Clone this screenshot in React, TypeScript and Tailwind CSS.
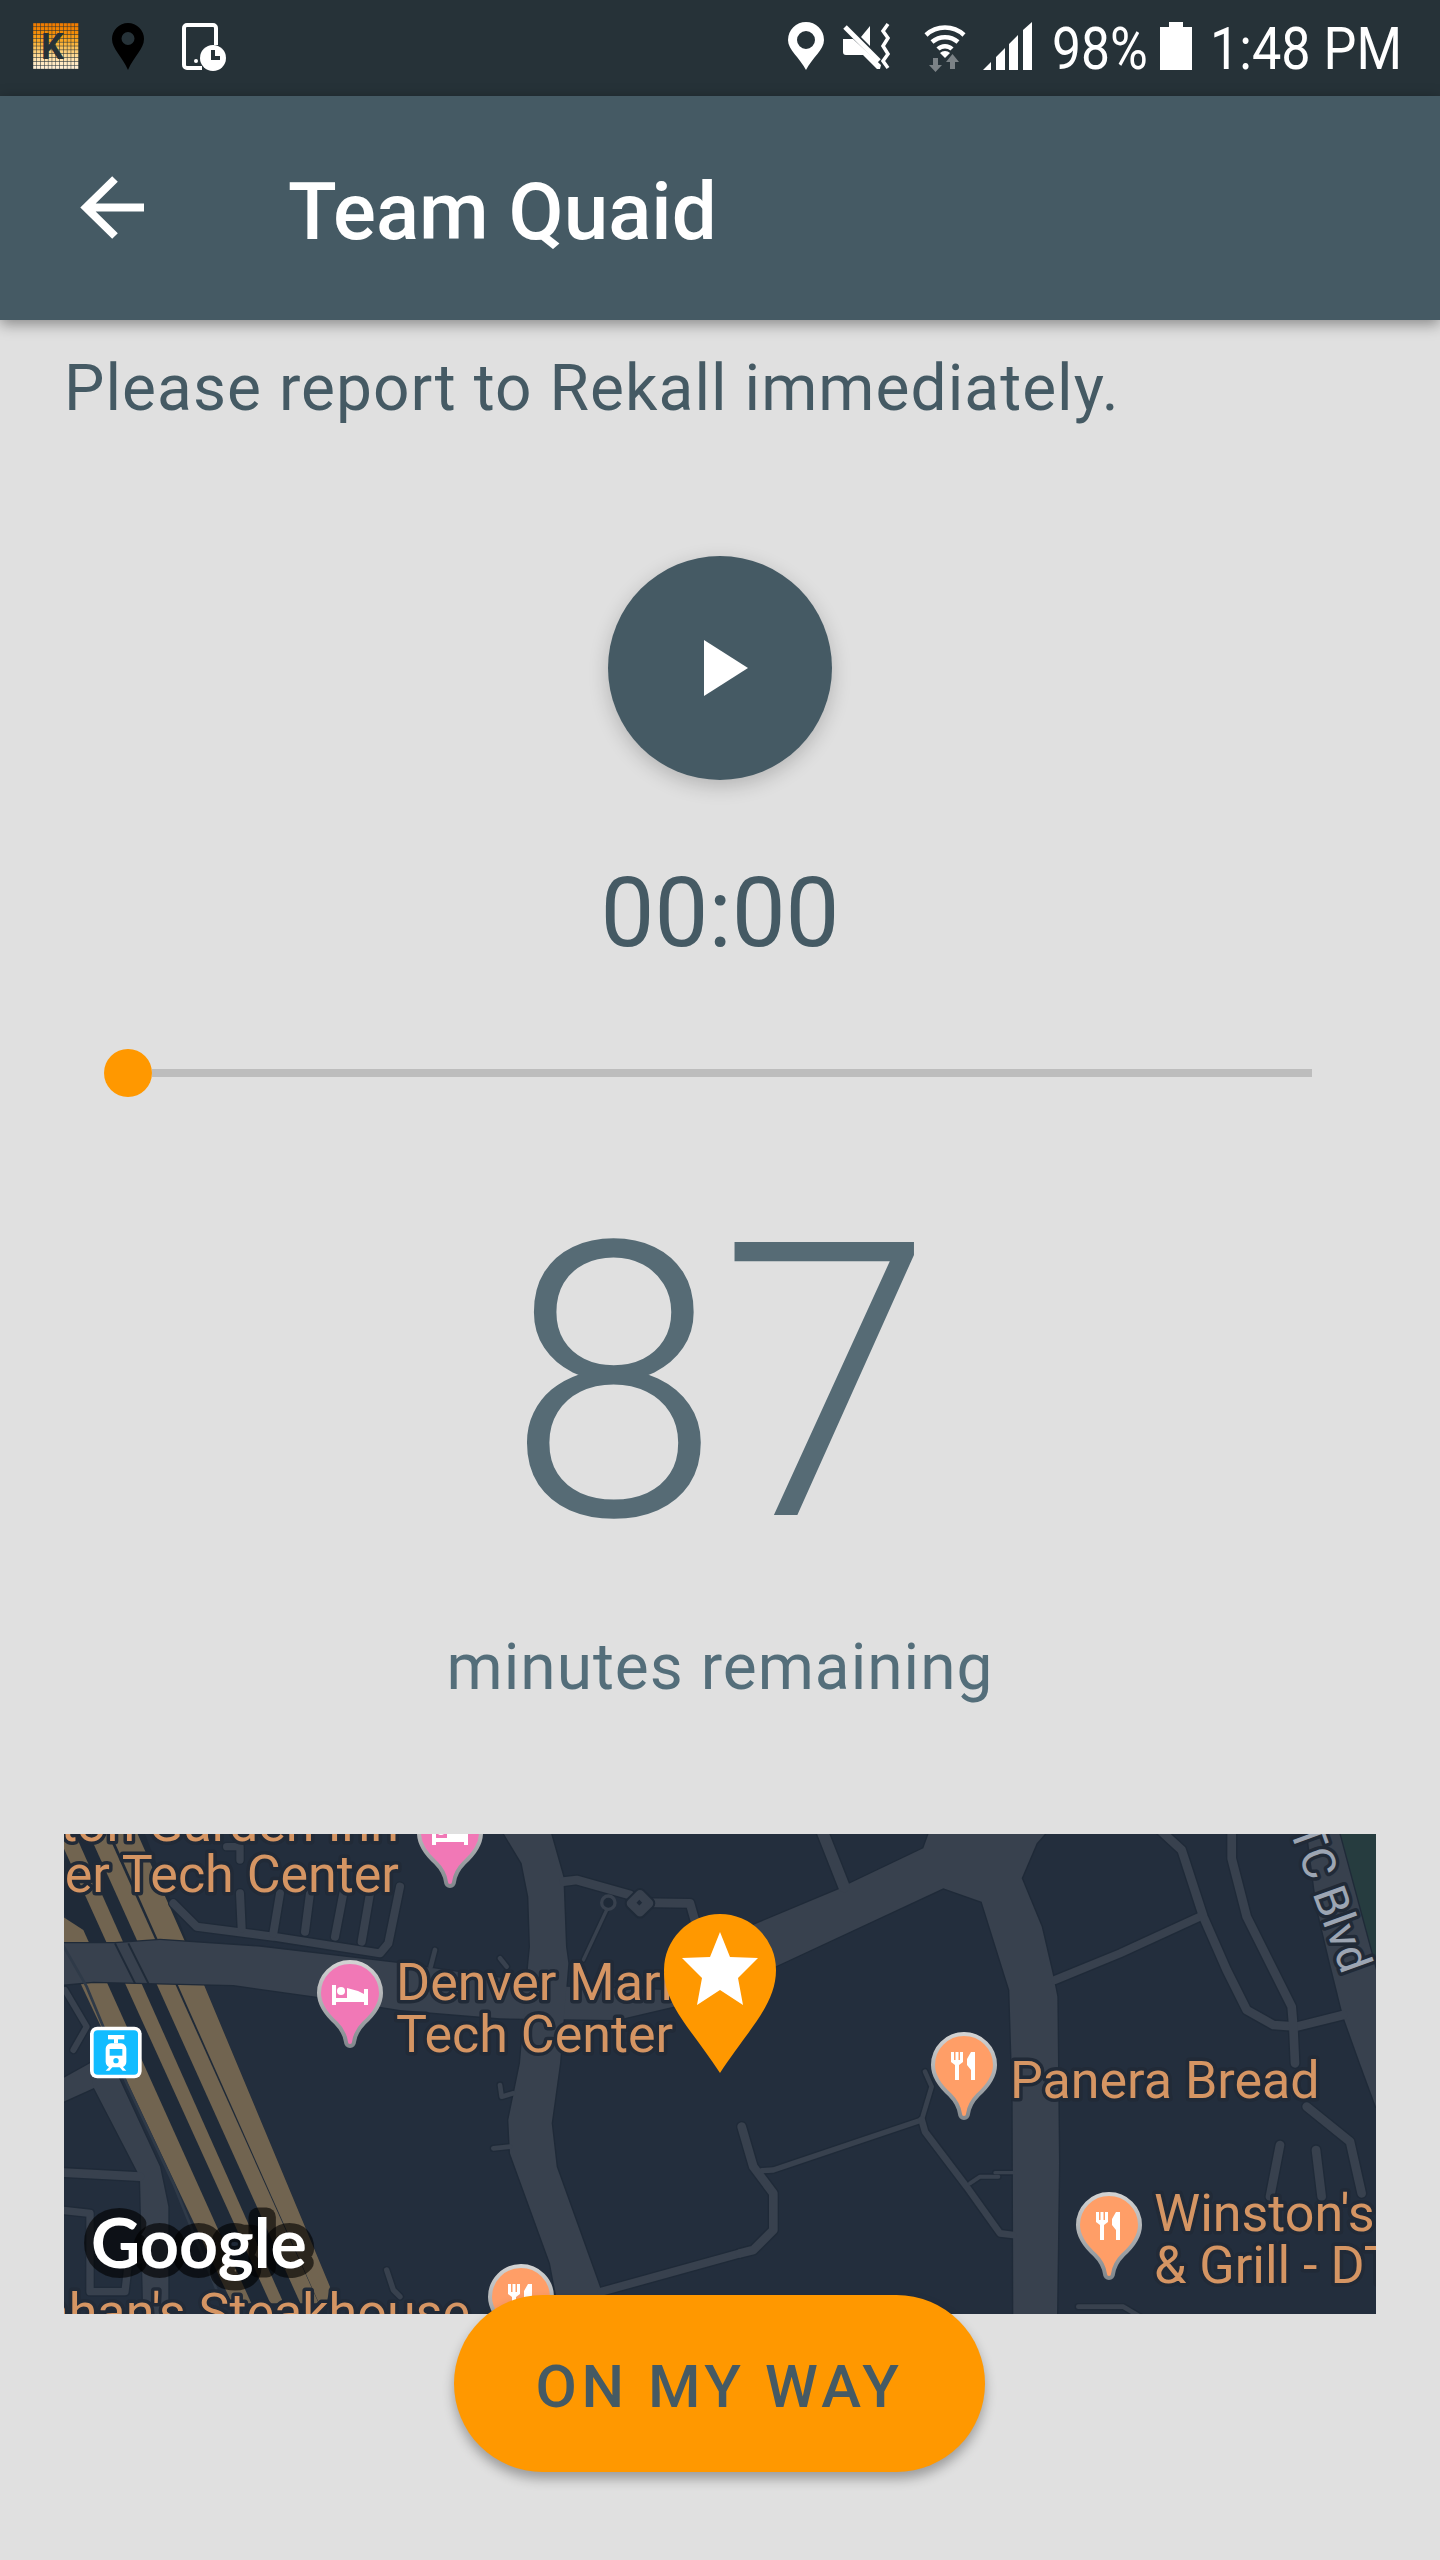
import React from "react";

const A = "translate(60 1830) scale(.33333)";
const B = "translate(400 1830) scale(.33333)";
const C = "translate(740 1830) scale(.33333)";
const D = "translate(1060 1830) scale(.33333)";

const polys: [string, string][] = [
  [A, "M0 340L165 340L300 330L600 350L1020 400L1220 430L1520 470L1820 480L1920 430L1920 510L1840 530L1670 570L1320 565L1020 540L770 500L520 465L100 455L0 465Z"],
  [A, "M0 750L90 700L110 770L0 820Z"],
  [A, "M90 700L170 730L300 1010L325 1130L325 1460L250 1460L240 1040L100 770Z"],
  [B, "M305 0L450 0L490 140L498 350L505 400L480 700L455 880L470 1010L610 1400L610 1460L480 1460L450 1300L330 970L325 870L360 700L385 400L390 350L385 200L365 100Z"],
  [C, "M-20 310L296 178L330 160L550 55L570 0L925 0L890 40L845 145L905 290L940 440L952 500L957 1000L951 1460L820 1460L818 800L808 480L725 215L610 175L105 410L-20 460Z"],
  [D, "M740 0L835 0L948 420L948 830L900 700L850 560L810 400L770 230Z"],
];

const lines: [string, string, number][] = [
  [A, "M0 1027L240 1040", 26],
  [A, "M0 1140L90 1150L90 1385L195 1385L205 1300L240 1290", 22],
  [A, "M15 480L80 590L40 660", 18],
  [A, "M340 220L410 290L640 320L960 370L985 340L1020 170", 24],
  [A, "M545 295L540 190", 24],
  [A, "M640 310L660 190", 24],
  [A, "M735 305L750 190", 24],
  [A, "M825 320L850 190", 24],
  [A, "M905 335L930 190", 24],
  [A, "M500 50L540 50L540 90", 22],
  [A, "M980 1320L1000 1380L1020 1400", 16],
  [B, "M490 155L530 150L690 195L720 218L870 220L890 290", 26],
  [B, "M620 240L550 390", 10],
  [B, "M105 360L92 410", 14],
  [B, "M300 385L320 410", 14],
  [B, "M300 765L305 800L340 790", 14],
  [B, "M280 955L330 950", 14],
  [B, "M605 1385L1020 1270", 24],
  [C, "M0 1270L40 1260L100 1200L100 1090L40 1010L5 890", 26],
  [C, "M65 1022L100 1020L545 870", 16],
  [C, "M545 870L575 770L555 725", 14],
  [C, "M545 870L555 905L680 1070L780 1210L820 1215", 20],
  [C, "M690 1060L720 1040L775 1040", 12],
  [C, "M765 1028L820 1028", 10],
  [C, "M245 0L312 170", 34],
  [D, "M-15 450L180 370L420 260", 24],
  [D, "M300 0L365 60L430 260L500 420L560 540L640 585L710 590L850 555", 26],
  [D, "M515 0L515 85L560 260L695 530L700 590L705 700", 26],
  [D, "M740 830L870 935L905 1090", 26],
  [D, "M660 945L630 1100", 26],
  [D, "M768 960L785 1100", 26],
  [D, "M55 1430L190 1430L240 1460", 14],
];

function Pin({ x, y, color, kind }: { x: number; y: number; color: string; kind: "bed" | "food" }) {
  return (
    <g transform={`translate(${x} ${y})`}>
      <path
        d="M-31 0A31 31 0 0 1 31 0C31 12 24 21 14 30C8 36 5 42 4 49A4 4 0 0 1 -4 49C-5 42 -8 36 -14 30C-24 21 -31 12 -31 0Z"
        fill={color}
        stroke="url(#pinEdge)"
        strokeWidth="4"
      />
      {kind === "bed" ? (
        <g fill="#fff">
          <rect x="-18" y="-8" width="4" height="20" />
          <rect x="-18" y="5" width="36" height="4" />
          <rect x="14" y="-4" width="4" height="16" />
          <circle cx="-9" cy="-2" r="4" />
          <path d="M-3 -5L8 -2L14 1L14 5L-3 5Z" />
        </g>
      ) : (
        <g fill="#fff">
          <path d="M-13 -13L-10 -13L-10 -5L-8.5 -5L-8.5 -13L-5.5 -13L-5.500 -5L-4 -5L-4 -13L-1 -13L-1 -3L-5 0L-5 15L-9 15L-9 0L-13 -3Z" />
          <path d="M3 -6L7 -13L11 -13L11 15L7 15L7 5L3 0Z" />
        </g>
      )}
    </g>
  );
}

function MapView() {
  const label = { fill: "#d59563", stroke: "#212a37", strokeWidth: 7, paintOrder: "stroke", strokeLinejoin: "round" as const, fontSize: 52 };
  return (
    <svg viewBox="64 1834 1312 480" className="block w-[1312px] h-[480px]">
      <defs>
        <linearGradient id="pinEdge" x1="0" y1="0" x2="0" y2="1">
          <stop offset="0" stopColor="#d2d2d2" />
          <stop offset="1" stopColor="#83898e" />
        </linearGradient>
      </defs>
      <rect x="64" y="1834" width="1312" height="480" fill="#232e3d" />
      <g transform={D}>
        <path d="M835 0L960 0L960 470Z" fill="#263c3f" />
      </g>
      {/* transit */}
      <g transform={A}>
        <path d="M60 0L250 0L430 460L660 1010L810 1370L800 1460L580 1460L0 220L0 120Z" fill="#1f2a38" />
        <path d="M0 255L70 300L574 1420L516 1420L0 330Z" fill="#716450" />
        <path d="M-8 0L40 0L671 1420L631 1420L0 30Z" fill="#716450" />
        <path d="M82 0L138 0L776 1420L721 1420Z" fill="#716450" />
        <path d="M153 12L233 12L320 210L430 460L660 1010L810 1370L800 1420L777 1420Z" fill="#716450" />
      </g>
      {polys.map(([t, d], i) => (
        <path key={`c${i}`} transform={t} d={d} fill="#1f2a38" stroke="#1f2a38" strokeWidth="8" strokeLinejoin="round" />
      ))}
      {lines.map(([t, d, w], i) => (
        <path key={`l${i}`} transform={t} d={d} fill="none" stroke="#1f2a38" strokeWidth={w + 8} strokeLinejoin="round" strokeLinecap="round" />
      ))}
      {polys.map(([t, d], i) => (
        <path key={`p${i}`} transform={t} d={d} fill="#38414e" />
      ))}
      {lines.map(([t, d, w], i) => (
        <path key={`q${i}`} transform={t} d={d} fill="none" stroke="#38414e" strokeWidth={w} strokeLinejoin="round" strokeLinecap="round" />
      ))}
      <g transform={A} fill="none">
        <path d="M165 340L225 460M205 340L265 460" stroke="#1f2a38" strokeWidth="6" />
        <path d="M0 330L80 470L200 760L340 1060L470 1380" stroke="#2f3a48" strokeWidth="8" />
      </g>
      <g transform={B}>
        <rect x="685" y="185" width="70" height="70" rx="16" transform="rotate(45 720 220)" fill="#38414e" stroke="#1f2a38" strokeWidth="6" />
        <rect x="712" y="212" width="12" height="12" transform="rotate(45 718 218)" fill="#1f2a38" />
        <circle cx="625" cy="218" r="20" fill="#1f2a38" stroke="#38414e" strokeWidth="10" />
      </g>

      {/* pois */}
      <g transform={A}>
        <rect x="90" y="590" width="155" height="155" rx="22" fill="#fff" />
        <rect x="101" y="601" width="133" height="133" rx="12" fill="#12bcff" />
        <g fill="#fff">
          <rect x="144" y="615" width="49" height="13" />
          <rect x="162" y="626" width="12" height="14" />
          <rect x="137" y="640" width="62" height="72" rx="16" />
          <path d="M137 722L150 708L160 708L148 722ZM199 722L186 708L176 708L188 722Z" />
        </g>
        <rect x="149" y="657" width="38" height="20" fill="#12bcff" />
        <circle cx="168" cy="692" r="8" fill="#12bcff" />
      </g>

      <text {...label} x="399" y="1841" textAnchor="end">Hilton Garden Inn</text>
      <text {...label} x="399" y="1892" textAnchor="end">Denver Tech Center</text>
      <text {...label} x="396" y="2000">Denver Marr</text>
      <text {...label} x="396" y="2052">Tech Center</text>
      <text {...label} x="1010" y="2098">Panera Bread</text>
      <text {...label} x="1154" y="2231">Winston's</text>
      <text {...label} x="1154" y="2283">&amp; Grill - DTC</text>
      <text {...label} x="470" y="2330" textAnchor="end">Shanahan's Steakhouse</text>
      <text
        transform="translate(1289 1829) rotate(70)"
        fill="#9ca5b3"
        stroke="#212a37"
        strokeWidth="7"
        strokeLinejoin="round"
        paintOrder="stroke"
        fontSize="46"
      >
        TC Blvd
      </text>

      <Pin x={350} y={1993} color="#f178b6" kind="bed" />
      <Pin x={450} y={1833} color="#f178b6" kind="bed" />
      <Pin x={964} y={2065} color="#ff9e67" kind="food" />
      <Pin x={1109} y={2225} color="#ff9e67" kind="food" />
      <Pin x={521} y={2297} color="#ff9e67" kind="food" />

      <path d="M720 2073C692 2030 664 2005 664 1970A56 56 0 0 1 776 1970C776 2005 748 2030 720 2073Z" fill="#ff9800" />
      <path d="M720 1932L730 1957L758 1958L738 1978L743 2005L720 1990L697 2005L702 1978L682 1958L710 1957Z" fill="#fff" />

      <text
        x="91"
        y="2268"
        fill="#fff"
        stroke="rgba(0,0,0,.62)"
        strokeWidth="19"
        strokeLinejoin="round"
        paintOrder="stroke"
        fontSize="68"
        fontWeight="700"
        className="font-['Lato',sans-serif]"
      >
        Google
      </text>
    </svg>
  );
}

function KIcon() {
  const cells: React.ReactNode[] = [];
  const ramp = ["#f07c00", "#f28200", "#f48c06", "#f79a14", "#f9a726", "#fbb53d", "#fcc25a", "#fdce78", "#fed993", "#ffe2ad", "#ffe9c2", "#ffeed2"];
  for (let r = 0; r < 12; r++) {
    for (let c = 0; c < 12; c++) {
      cells.push(<rect key={`${r}-${c}`} x={c * 3.8 + 0.2} y={r * 3.85 + 0.2} width="3.3" height="3.3" fill={ramp[r]} />);
    }
  }
  return (
    <svg width="46" height="47" viewBox="0 0 46 47" className="shrink-0">
      {cells}
      <text x="8" y="36" fontSize="36" fontWeight="700" fill="#263238">K</text>
    </svg>
  );
}

function StatusBar() {
  return (
    <div className="h-[96px] bg-[#263238] flex items-start shrink-0">
      <div className="flex items-start ml-[33px] mt-[23px]">
        <KIcon />
        <svg width="32" height="47" viewBox="0 0 32 47" className="ml-[33px]">
          <path fillRule="evenodd" d="M16 47C10 33 0 26 0 16A16 16 0 0 1 32 16C32 26 22 33 16 47ZM16 9A6.500 6.500 0 1 0 16 22A6.500 6.500 0 1 0 16 9Z" fill="#000" />
        </svg>
        <svg width="46" height="48" viewBox="0 0 46 48" className="ml-[38px]">
          <path d="M20 45H5A3 3 0 0 1 2 42V5A3 3 0 0 1 5 2H31A3 3 0 0 1 34 5V22" fill="none" stroke="#fff" strokeWidth="4" />
          <circle cx="31" cy="35" r="13" fill="#fff" />
          <path d="M29 27V37H38V33H33V27Z" fill="#263238" />
          <circle cx="14" cy="38" r="2" fill="#fff" />
        </svg>
      </div>
      <div className="ml-auto flex items-start mt-[22px]">
        <svg width="36" height="48" viewBox="0 0 36 48">
          <path fillRule="evenodd" d="M18 48C12 36 0 28 0 18A18 18 0 0 1 36 18C36 28 24 36 18 48ZM18 9A9 9 0 1 0 18 27A9 9 0 1 0 18 9Z" fill="#fff" />
        </svg>
        <svg width="52" height="48" viewBox="0 0 52 48" className="ml-[19px]">
          <path d="M0 17H10L38 43L37 47L34 47L20 33H3A3 3 0 0 1 0 30Z" fill="#fff" />
          <path d="M2 5L36 39" stroke="#fff" strokeWidth="5" />
          <path d="M18 15L27 4V24Z" fill="#fff" />
          <path d="M45 2L40 9L45 16L40 24L45 32L40 39L45 46" fill="none" stroke="#fff" strokeWidth="3.500" />
        </svg>
        <svg width="42" height="50" viewBox="0 0 42 50" className="ml-[29px]">
          <path d="M2 13A28 28 0 0 1 40 13M8 20A20 20 0 0 1 34 20M14 27A10 10 0 0 1 28 27" fill="none" stroke="#fff" strokeWidth="4.500" />
          <path d="M16 31A7 7 0 0 1 26 31L21 36Z" fill="#fff" />
          <path d="M9 36H14V43H18L11.500 50L5 43H9Z" fill="#7b8286" />
          <path d="M26 47H31V40H35L28.500 32L22 40H26Z" fill="#7b8286" />
        </svg>
        <svg width="49" height="49" viewBox="0 0 49 49" className="ml-[17px]">
          <path d="M0 48L8 40V48ZM13 48V35L22 26V48ZM26 48V22L35 13V48ZM40 48V8L49 0V48Z" fill="#fff" />
        </svg>
        <div className="w-[100px] ml-[20px] mt-[-3px] h-[60px] text-white text-[60px] leading-[60px] font-normal scale-x-[.86] origin-left whitespace-nowrap">98%</div>
        <svg width="32" height="48" viewBox="0 0 32 48" className="ml-[8px]">
          <path d="M9 0H23V5H32V48H0V5H9Z" fill="#fff" />
        </svg>
        <div className="w-[190px] ml-[18px] mr-[40px] mt-[-3px] h-[60px] text-white text-[60px] leading-[60px] font-normal scale-x-[.87] origin-left whitespace-nowrap">1:48 PM</div>
      </div>
    </div>
  );
}

export default function App() {
  return (
    <div className="w-[1440px] h-[2560px] bg-[#e0e0e0] flex flex-col overflow-hidden font-['Roboto',sans-serif]">
      <StatusBar />
      <header className="h-[224px] bg-[#455a64] flex items-center shrink-0 relative z-10 shadow-[0_4px_14px_rgba(0,0,0,0.4)]">
        <svg width="64" height="64" viewBox="0 0 64 64" className="ml-[80px]">
          <path d="M64 31.500H6M35 3L6 31.500L35 60" fill="none" stroke="#fff" strokeWidth="8" />
        </svg>
        <h1 className="ml-[144px] mt-[7px] text-white text-[80px] font-medium leading-none">Team Quaid</h1>
      </header>
      <main className="flex flex-col items-center">
        <p className="self-start ml-[64px] mt-[31px] text-[64px] leading-[76px] text-[#455a64] tracking-[1.05px] whitespace-nowrap">
          Please report to Rekall immediately.
        </p>
        <button className="mt-[129px] w-[224px] h-[224px] rounded-full bg-[#455a64] flex items-center justify-center shadow-[0_6px_20px_rgba(0,0,0,0.2)]">
          <svg width="44" height="56" viewBox="0 0 44 56" className="ml-[12px]">
            <path d="M0 0L44 28L0 56Z" fill="#fff" />
          </svg>
        </button>
        <div className="mt-[77px] text-[96px] leading-[112px] text-[#455a64]">00:00</div>
        <div className="mt-[80px] flex items-center self-start ml-[104px]">
          <div className="w-[48px] h-[48px] rounded-full bg-[#ff9800]" />
          <div className="w-[1160px] h-[8px] bg-[#bdbdbd]" />
        </div>
        <div className="mt-[62px] text-[384px] leading-[450px] font-light text-[#566b75]">87</div>
        <div className="mt-[21px] text-[64px] leading-[76px] text-[#546e7a] tracking-[1px]">minutes remaining</div>
        <div className="mt-[128px] self-start ml-[64px] w-[1312px] h-[480px] overflow-hidden">
          <MapView />
        </div>
        <button className="relative mt-[-19px] ml-[-1px] pt-[6px] w-[531px] h-[177px] rounded-full bg-[#ff9800] text-[#455a64] text-[60px] font-medium tracking-[4.6px] shadow-[0_7px_12px_rgba(0,0,0,0.3)]">
          ON MY WAY
        </button>
      </main>
    </div>
  );
}
